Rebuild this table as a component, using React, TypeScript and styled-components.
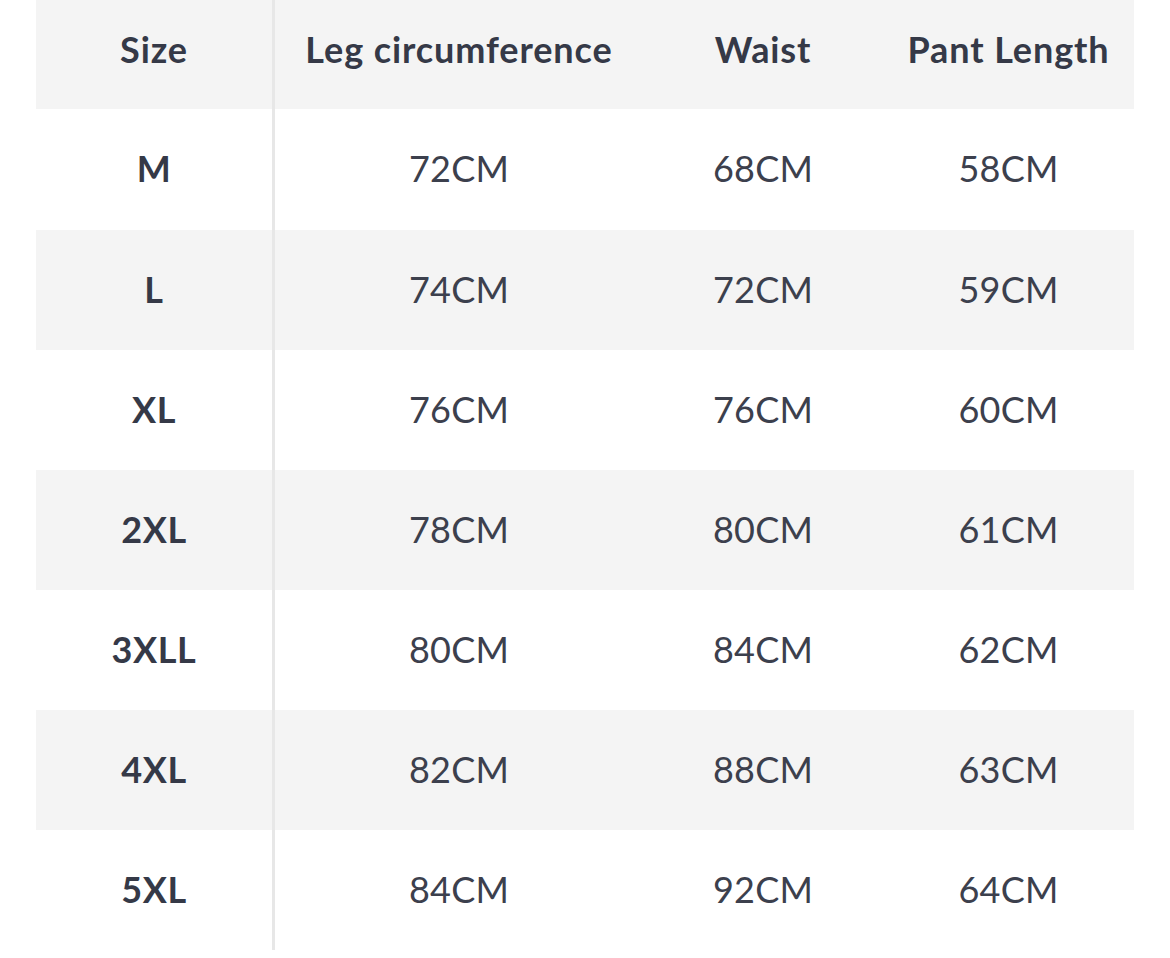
import styled, { createGlobalStyle } from 'styled-components'

const GlobalStyle = createGlobalStyle`
    body {
        margin: 0;
        background: #ffffff;
        font-family: Lato, "Open Sans", sans-serif;
        color: #383c4a;
    }
`

const headers = ['Size', 'Leg circumference', 'Waist', 'Pant Length']

const rows = [
    ['M', '72CM', '68CM', '58CM'],
    ['L', '74CM', '72CM', '59CM'],
    ['XL', '76CM', '76CM', '60CM'],
    ['2XL', '78CM', '80CM', '61CM'],
    ['3XLL', '80CM', '84CM', '62CM'],
    ['4XL', '82CM', '88CM', '63CM'],
    ['5XL', '84CM', '92CM', '64CM'],
]

export default function App() {
    return <>
        <GlobalStyle />
        <SizeTable>
            <HeaderRow>
                {headers.map((h, i) => (
                    <HeaderCell key={h} $first={i === 0}>{h}</HeaderCell>
                ))}
            </HeaderRow>

            {rows.map((row, r) => (
                <BodyRow key={row[0]} $shaded={r % 2 === 1} $tall={r === 0}>
                    {row.map((value, i) => (
                        <BodyCell key={i} $first={i === 0}>{value}</BodyCell>
                    ))}
                </BodyRow>
            ))}
        </SizeTable>
    </>
}

export const SizeTable = styled.div`
    margin-left: 36px;
    width: 1098px;
    padding-bottom: 8px;
`

const columns = `239px 368px 240px 251px`

export const HeaderRow = styled.div`
    display: grid;
    grid-template-columns: ${columns};
    height: 109px;
    background: #f4f4f4;
`

export const HeaderCell = styled.div<{ $first?: boolean }>`
    display: flex;
    align-items: center;
    justify-content: center;
    padding-bottom: 12px;
    font-size: 36px;
    font-weight: 700;
    letter-spacing: 0.9px;
    color: #353947;
    white-space: nowrap;
    border-right: ${p => p.$first ? '3px solid #e7e7e7' : 'none'};
`

export const BodyRow = styled.div<{ $shaded?: boolean; $tall?: boolean }>`
    display: grid;
    grid-template-columns: ${columns};
    height: ${p => p.$tall ? '121px' : '120px'};
    background: ${p => p.$shaded ? '#f4f4f4' : '#ffffff'};
`

export const BodyCell = styled.div<{ $first?: boolean }>`
    display: flex;
    align-items: center;
    justify-content: center;
    padding-bottom: 3px;
    font-size: 36px;
    font-weight: ${p => p.$first ? 700 : 400};
    letter-spacing: ${p => p.$first ? '0.6px' : '0.2px'};
    color: ${p => p.$first ? '#353947' : '#3c404d'};
    border-right: ${p => p.$first ? '3px solid #e7e7e7' : 'none'};
`
